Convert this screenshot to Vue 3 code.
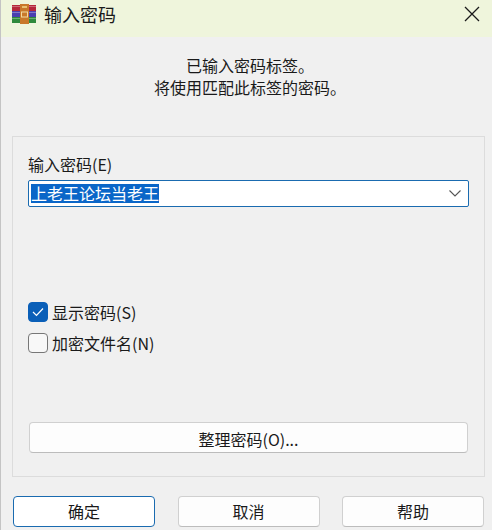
<template>
  <div class="dialog">
    <div class="title-bar">
      <svg class="app-icon" width="24" height="20" viewBox="0 0 24 20" xmlns="http://www.w3.org/2000/svg">
        <rect x="0" y="1" width="24" height="6" fill="#b5283a" />
        <rect x="0" y="7" width="24" height="6" fill="#4a3fb0" />
        <rect x="0" y="13" width="24" height="6" fill="#2f8a3c" />
        <path d="M0 2.500h24M0 8.500h24M0 14.500h24" stroke="#fff" stroke-opacity="0.3" />
        <rect x="8" y="0" width="9" height="20" fill="#c9782a" />
        <rect x="9.500" y="8" width="6" height="5" fill="none" stroke="#f0d9a0" stroke-width="1" />
        <rect x="10" y="2" width="5" height="2" fill="#e8c070" />
      </svg>
      <span class="title">{{ title }}</span>
      <svg class="close-icon" width="16" height="16" viewBox="0 0 16 16" xmlns="http://www.w3.org/2000/svg">
        <path d="M1 1l14 14M15 1L1 15" fill="none" stroke="#1a1a1a" stroke-width="1.3" />
      </svg>
    </div>

    <div class="message">
      <div v-for="line in message" :key="line">{{ line }}</div>
    </div>

    <div class="panel">
      <label class="field-label">输入密码(E)</label>
      <div class="combo">
        <span class="selected-text">上老王论坛当老王</span>
        <svg class="chevron" width="12" height="7" viewBox="0 0 12 7" xmlns="http://www.w3.org/2000/svg">
          <path d="M0.5 0.5L6 6l5.500-5.500" fill="none" stroke="#555" stroke-width="1.1" />
        </svg>
      </div>

      <div class="checks">
        <div v-for="opt in options" :key="opt.label" class="check-row">
          <span class="check-box" :class="{ checked: opt.checked }">
            <svg v-if="opt.checked" width="12" height="10" viewBox="0 0 12 10" xmlns="http://www.w3.org/2000/svg">
              <path d="M1 5l3.500 3.500L11 1.500" fill="none" stroke="#fff" stroke-width="1.2" />
            </svg>
          </span>
          <span>{{ opt.label }}</span>
        </div>
      </div>

      <button class="btn organize">整理密码(O)...</button>
    </div>

    <div class="footer">
      <button v-for="(b, index) in buttons" :key="b" class="btn" :class="{ primary: index === 0 }">{{ b }}</button>
    </div>
  </div>
</template>

<script setup>
const title = '输入密码'
const message = ['已输入密码标签。', '将使用匹配此标签的密码。']
const options = [
  { label: '显示密码(S)', checked: true },
  { label: '加密文件名(N)', checked: false }
]
const buttons = ['确定', '取消', '帮助']
</script>

<style>
html, body {
  margin: 0;
  background: #f0f0f0;
}
</style>

<style scoped>
.dialog {
  width: 492px;
  height: 530px;
  box-sizing: border-box;
  overflow: hidden;
  background: #f0f0f0;
  border-left: 1px solid #c4c4c4;
  color: #1a1a1a;
  font-family: "Noto Sans CJK SC", "Liberation Sans", sans-serif;
  font-size: 16px;
}

.title-bar {
  height: 37px;
  box-sizing: border-box;
  display: flex;
  align-items: center;
  background: #eff5dc;
  padding: 0 12px 9px 11px;
}

.title {
  margin-left: 8px;
  font-size: 18px;
  flex-grow: 1;
}

.message {
  height: 99px;
  box-sizing: border-box;
  padding: 17px 0 0 7px;
  text-align: center;
  line-height: 22px;
}

.panel {
  height: 341px;
  box-sizing: border-box;
  margin: 0 7px 0 11px;
  padding: 16px 15px 0 15px;
  border: 1px solid #dcdcdc;
  display: flex;
  flex-direction: column;
}

.field-label {
  line-height: 22px;
  margin-bottom: 5px;
}

.combo {
  height: 27px;
  box-sizing: border-box;
  background: #fff;
  border: 1px solid #1a6bb0;
  border-radius: 2px;
  display: flex;
  align-items: center;
  justify-content: space-between;
  padding: 0 7px 0 2px;
}

.selected-text {
  background: #0a66c8;
  color: #fff;
  line-height: 19px;
}

.checks {
  margin-top: 95px;
  display: flex;
  flex-direction: column;
  gap: 11px;
}

.check-row {
  display: flex;
  align-items: center;
  gap: 4px;
  height: 20px;
}

.check-box {
  width: 20px;
  height: 20px;
  box-sizing: border-box;
  border-radius: 4px;
  border: 1px solid #777;
  background: #f8f8f8;
  display: flex;
  align-items: center;
  justify-content: center;
}

.check-box.checked {
  background: #0a5fb8;
  border-color: #0a5fb8;
}

.btn {
  font-family: inherit;
  font-size: 16px;
  color: #1a1a1a;
  background: #fdfdfd;
  border: 1px solid #d0d0d0;
  border-bottom-color: #bcbcbc;
  border-radius: 4px;
  padding: 0;
}

.organize {
  height: 31px;
  margin-top: 69px;
  margin-left: 1px;
  margin-right: 1px;
  padding-top: 2px;
}

.footer {
  display: flex;
  justify-content: space-between;
  margin: 19px 8px 0 12px;
}

.footer .btn {
  width: 142px;
  height: 31px;
  padding-bottom: 2px;
}

.footer .primary {
  background: #fff;
  border: 1px solid #1a6bb0;
}
</style>
